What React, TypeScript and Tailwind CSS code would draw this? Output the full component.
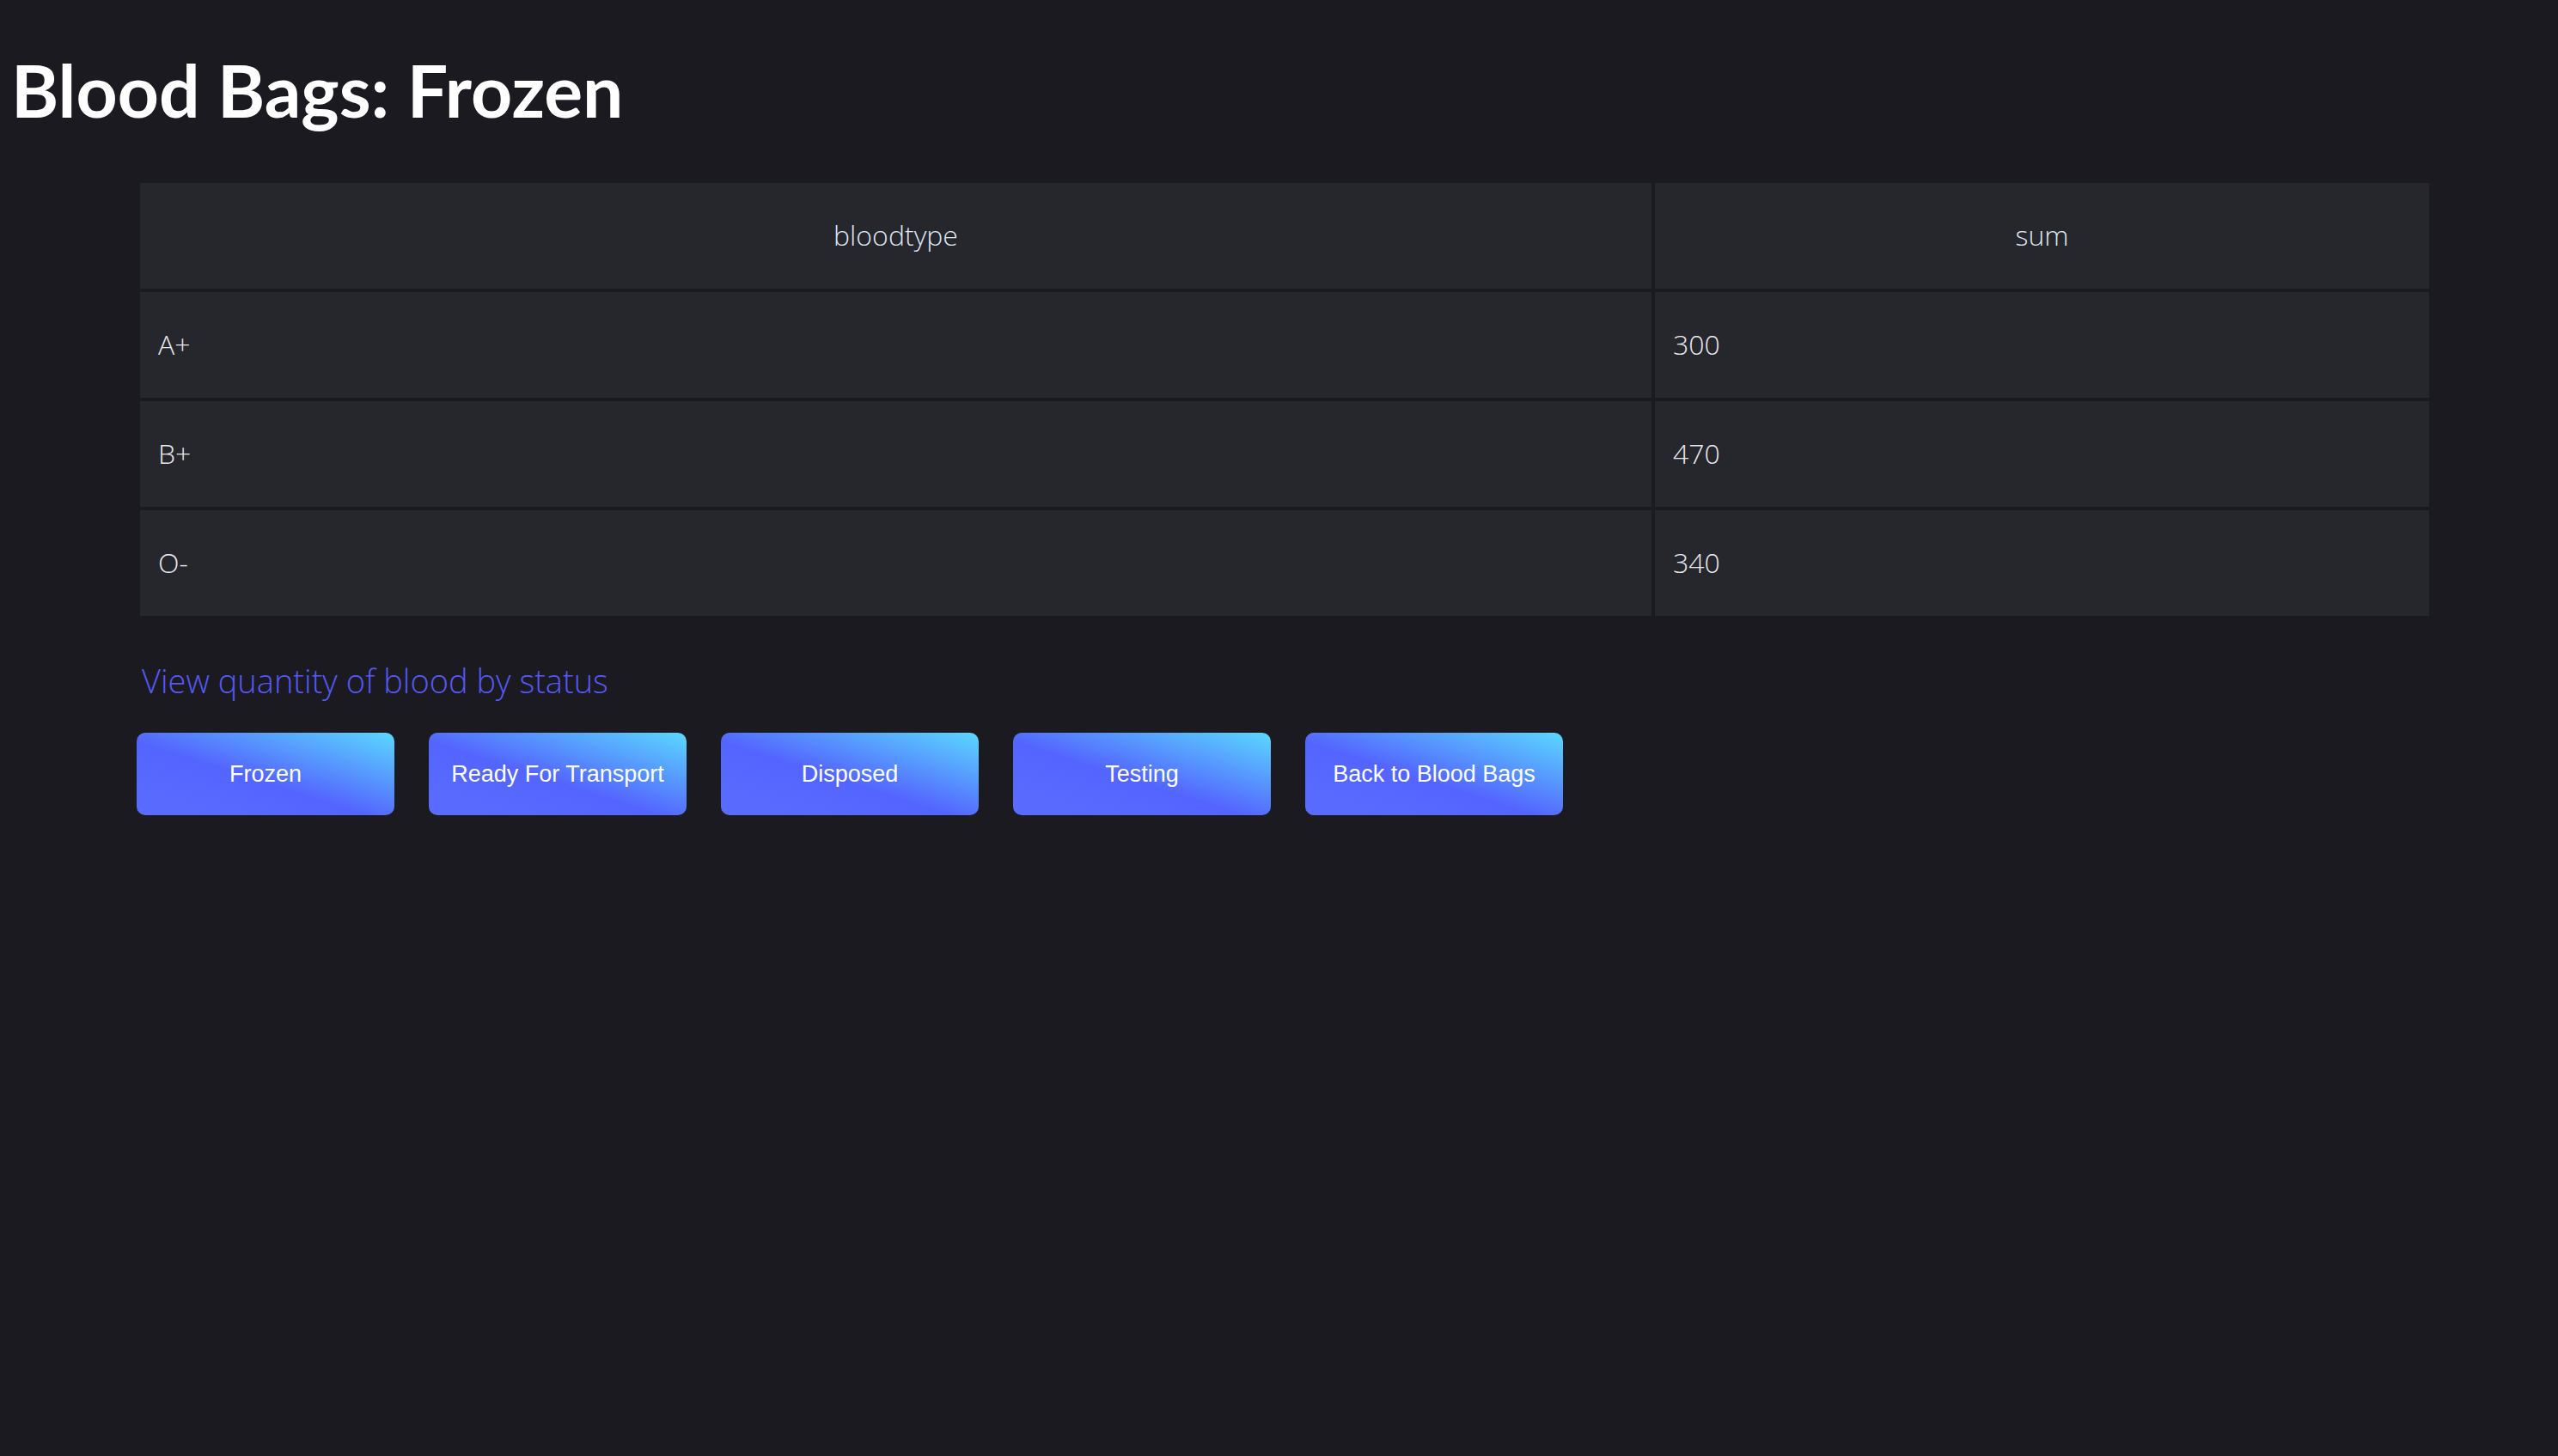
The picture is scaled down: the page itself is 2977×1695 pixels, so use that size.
import React from 'react';

const rows = [
  { bloodtype: 'A+', sum: 300 },
  { bloodtype: 'B+', sum: 470 },
  { bloodtype: 'O-', sum: 340 },
];

const statuses = ['Frozen', 'Ready For Transport', 'Disposed', 'Testing', 'Back to Blood Bags'];

const App: React.FC = () => {
  return (
    <div className="min-h-screen w-full bg-[#1b1a20] text-white font-['Lato','Open_Sans',sans-serif]">
      {/* Page title */}
      <h1 className="m-0 pl-[13px] pt-[55px] text-[84px] font-bold leading-[1.2] text-white">
        Blood Bags: Frozen
      </h1>

      {/* Quantity table */}
      <table className="ml-[159px] mt-[53px] w-[2672px] border-separate border-spacing-[4px] font-['Open_Sans',sans-serif] font-light text-[32px]">
        <thead>
          <tr>
            <th className="h-[123px] w-[1759px] bg-[#26262d] p-0 text-center font-light text-[#dde5f0]">bloodtype</th>
            <th className="h-[123px] bg-[#26262d] p-0 text-center font-light text-[#dde5f0]">sum</th>
          </tr>
        </thead>
        <tbody>
          {rows.map((row) => (
            <tr key={row.bloodtype}>
              <td className="h-[123px] bg-[#26262d] py-0 pl-[21px] text-left text-[#e8e8ec]">{row.bloodtype}</td>
              <td className="h-[123px] bg-[#26262d] py-0 pl-[21px] text-left text-[#e8e8ec]">{row.sum}</td>
            </tr>
          ))}
        </tbody>
      </table>

      {/* Status navigation */}
      <div className="ml-[165px] mt-[47px] font-['Open_Sans',sans-serif] font-light text-[38px] leading-[1.3] text-[#5459f5]">
        <a className="cursor-pointer">View quantity of blood by status</a>
      </div>

      <div className="ml-[159px] mt-[36px] flex gap-[40px]">
        {statuses.map((s) => (
          <button
            key={s}
            className="flex h-[96px] w-[300px] items-center justify-center rounded-[10px] bg-[linear-gradient(to_top_right,#5a6cff_0%,#5465ff_45%,#5ad8ff_100%)] font-['Liberation_Sans',Arial,sans-serif] text-[27px] text-white"
          >
            {s}
          </button>
        ))}
      </div>
    </div>
  );
};

export default App;
